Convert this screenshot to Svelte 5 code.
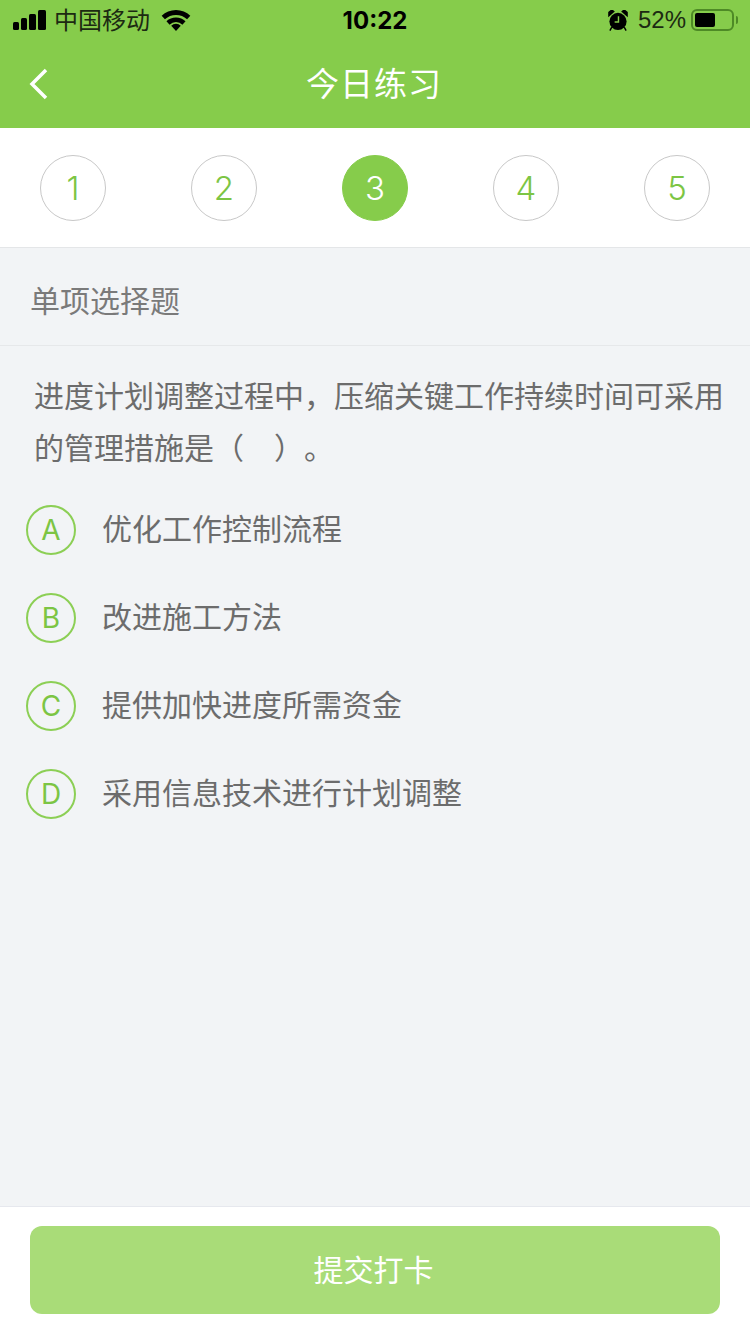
<script>
  const steps = [1, 2, 3, 4, 5];
  const current = 3;
  const options = [
    { key: "A", text: "优化工作控制流程" },
    { key: "B", text: "改进施工方法" },
    { key: "C", text: "提供加快进度所需资金" },
    { key: "D", text: "采用信息技术进行计划调整" }
  ];
</script>

<div class="page">
  <header class="header">
    <div class="status-bar">
      <div class="status-left">
        <svg class="signal" width="33" height="20" viewBox="0 0 33 20">
          <rect x="0" y="12" width="6" height="8" rx="1.500" />
          <rect x="8" y="8" width="6" height="12" rx="1.500" />
          <rect x="16" y="4" width="7" height="16" rx="1.500" />
          <rect x="25" y="0" width="8" height="20" rx="1.500" />
        </svg>
        <span class="carrier">中国移动</span>
        <svg class="wifi" width="30" height="21" viewBox="0 0 30 22">
          <path d="M15 22l-5-5.600a7 7 0 0 1 10 0z" />
          <path d="M15 7.800c3.900 0 7.400 1.500 10 3.900l-3.300 3.700a9.600 9.600 0 0 0-13.400 0L5 11.700a14.600 14.600 0 0 1 10-3.900z" />
          <path d="M15 0c5.800 0 11 2.300 15 6l-3.400 3.800A17.200 17.200 0 0 0 15 5.200 17.200 17.200 0 0 0 3.400 9.800L0 6C4 2.300 9.200 0 15 0z" />
        </svg>
      </div>
      <span class="time">10:22</span>
      <div class="status-right">
        <svg class="alarm" width="20" height="21" viewBox="0 0 20 22">
          <circle cx="10" cy="12" r="9" />
          <path d="M.5 6l5-4.500L3.500 0 .5 2.500zM19.500 6l-5-4.500L16.500 0l3 2.500zM3.500 18l-2 3.500M16.500 18l2 3.500" stroke="#000" stroke-width="1.500" />
          <path d="M10.500 6.500v6h-4" fill="none" stroke="#86cc4b" stroke-width="1.500" />
        </svg>
        <span class="battery-pct">52%</span>
        <div class="battery"><div class="battery-fill"></div></div>
        <div class="battery-cap"></div>
      </div>
    </div>
    <div class="nav-bar">
      <svg class="back" width="20" height="32" viewBox="0 0 20 32">
        <path d="M17 2L3 16l14 14" fill="none" stroke="#fff" stroke-width="3.500" />
      </svg>
      <span class="title">今日练习</span>
    </div>
  </header>

  <div class="steps">
    {#each steps as n}
      <div class="step" class:active={n === current}>{n}</div>
    {/each}
  </div>

  <main class="content">
    <div class="section-title"><span>单项选择题</span></div>
    <p class="question">进度计划调整过程中，压缩关键工作持续时间可采用的管理措施是（　）。</p>
    <ul class="options">
      {#each options as opt}
        <li class="option">
          <span class="badge">{opt.key}</span>
          <span class="option-text">{opt.text}</span>
        </li>
      {/each}
    </ul>
  </main>

  <footer class="footer">
    <button class="submit">提交打卡</button>
  </footer>
</div>

<style>
  :global(body) {
    margin: 0;
    font-family: "Liberation Sans", "Noto Sans CJK SC", sans-serif;
  }

  .page {
    width: 750px;
    height: 1334px;
    display: flex;
    flex-direction: column;
    background: #f2f4f6;
  }

  .header {
    height: 128px;
    flex: none;
    background: #86cc4b;
  }

  .status-bar {
    height: 40px;
    display: flex;
    align-items: center;
    justify-content: space-between;
    padding: 0 12px 0 13px;
    color: #000;
    position: relative;
  }

  .status-left,
  .status-right {
    display: flex;
    align-items: center;
  }

  .signal {
    margin-right: 9px;
  }

  .carrier {
    font-size: 24px;
    color: #1c2a12;
    margin: 0 0 4px -1px;
  }

  .wifi {
    margin-left: 11px;
  }

  .time {
    position: absolute;
    left: 0;
    right: 0;
    text-align: center;
    font-size: 24px;
    font-weight: 700;
    font-family: Inter, "Liberation Sans", sans-serif;
  }

  .alarm {
    margin-right: 10px;
  }

  .battery-pct {
    font-size: 24px;
    margin-right: 5px;
    color: #1c2a12;
  }

  .battery {
    width: 43px;
    height: 22px;
    box-sizing: border-box;
    border: 2px solid #4e8a26;
    border-radius: 6px;
    padding: 2px;
  }

  .battery-fill {
    width: 20px;
    height: 14px;
    background: #000;
    border-radius: 2px;
  }

  .battery-cap {
    width: 2px;
    height: 8px;
    margin-left: 2px;
    background: #4e8a26;
    border-radius: 0 2px 2px 0;
  }

  .nav-bar {
    height: 88px;
    display: flex;
    align-items: center;
    justify-content: center;
    position: relative;
  }

  .back {
    position: absolute;
    left: 29px;
    top: 28px;
  }

  .title {
    font-size: 33px;
    color: #fff;
    letter-spacing: 1px;
    margin: -5px 2px 0 0;
  }

  .steps {
    flex: none;
    display: flex;
    align-items: center;
    justify-content: space-between;
    padding: 0 40px;
    box-sizing: border-box;
    background: #fff;
    border-bottom: 1px solid #e4e6e8;
    height: 120px;
  }

  .step {
    width: 66px;
    height: 66px;
    box-sizing: border-box;
    border: 1px solid #c8c8c8;
    border-radius: 50%;
    display: flex;
    align-items: center;
    justify-content: center;
    font-size: 33px;
    color: #7cc544;
    font-family: Inter, "Liberation Sans", sans-serif;
    font-weight: 300;
  }

  .step.active {
    background: #86cc4b;
    border-color: #86cc4b;
    color: #fff;
  }

  .content {
    flex: 1;
  }

  .section-title {
    height: 98px;
    box-sizing: border-box;
    padding: 5px 0 0 30px;
    display: flex;
    align-items: center;
    font-size: 30px;
    color: #7a7a7a;
    border-bottom: 1px solid #e6e8ea;
  }

  .question {
    margin: 25px 0 0;
    padding: 0 26px 0 34px;
    font-size: 30px;
    line-height: 52px;
    color: #6c6c6c;
    text-spacing-trim: space-all;
  }

  .options {
    list-style: none;
    margin: 11px 0 0;
    padding: 0 0 0 26px;
  }

  .option {
    height: 88px;
    display: flex;
    align-items: center;
  }

  .badge {
    width: 50px;
    height: 50px;
    flex: none;
    box-sizing: border-box;
    border: 2px solid #8ccf55;
    border-radius: 50%;
    display: flex;
    align-items: center;
    justify-content: center;
    font-size: 28px;
    color: #7cc544;
    font-family: Inter, "Liberation Sans", sans-serif;
    font-weight: 400;
  }

  .option-text {
    margin-left: 26px;
    font-size: 30px;
    color: #6c6c6c;
    position: relative;
    top: -3px;
  }

  .footer {
    flex: none;
    height: 128px;
    box-sizing: border-box;
    padding: 19px 30px 0;
    background: #fff;
    border-top: 1px solid #e6e8ee;
  }

  .submit {
    display: block;
    width: 100%;
    height: 88px;
    border: 0;
    border-radius: 12px;
    padding: 0 3px 4px 0;
    background: #a9dc78;
    color: #fff;
    font-size: 30px;
    font-family: inherit;
  }
</style>
